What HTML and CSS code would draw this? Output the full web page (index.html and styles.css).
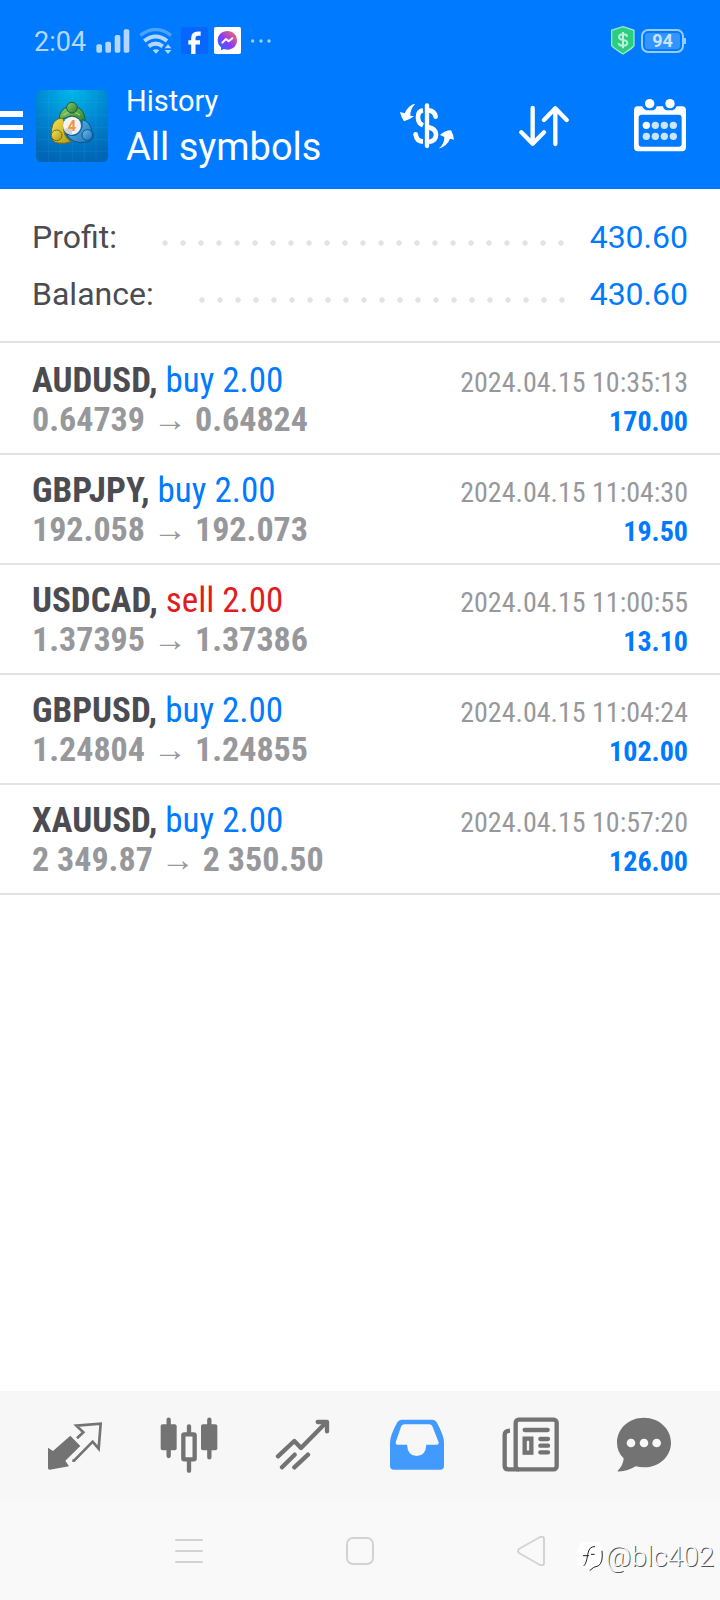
FILE: index.html
```html
<!DOCTYPE html>
<html lang="en">
<head>
<meta charset="utf-8">
<meta name="viewport" content="width=device-width, initial-scale=1">
<title>History</title>
<link rel="stylesheet" href="styles.css">
</head>
<body>
<div class="app">
  <div class="status">
    <span class="time">2:04</span>
    <svg class="signal" width="34" height="24" viewBox="288 84 102 72" fill="#b3d7ff"><rect x="289" y="130" width="17" height="25" rx="5"/><rect x="316" y="122" width="17" height="33" rx="5"/><rect x="344" y="102" width="17" height="53" rx="5"/><rect x="371" y="85" width="17" height="70" rx="5"/></svg>
    <svg class="wifi" width="33" height="26" viewBox="414 81 99 78" fill="none" stroke-width="10"><path d="M418 103Q464 68 510 103" stroke="#4ba3ff"/><path d="M430 120Q464 93 498 120M443 136Q464 120 485 136" stroke="#b3d7ff" stroke-width="12"/><path d="M455 148Q465 142 475 148L465 158ZM491 142L501 130 511 142ZM491 147H511L501 159Z" fill="#b3d7ff"/></svg>
    <svg class="fb" width="27" height="27" viewBox="0 0 81 81"><rect width="81" height="81" rx="5" fill="#0866ff"/><path d="M37 81V33Q37 20 51 20H59M22 46H57" fill="none" stroke="#fff" stroke-width="13"/></svg>
    <svg class="msgr" width="27" height="27" viewBox="0 0 81 81"><defs><linearGradient id="mg" x1="0" y1="1" x2="1" y2="0"><stop offset="0" stop-color="#087bff"/><stop offset=".45" stop-color="#8a39f7"/><stop offset="1" stop-color="#ff705b"/></linearGradient></defs><rect width="81" height="81" rx="5" fill="#fff"/><path d="M40 12C23 12 11 24 11 40Q11 53 21 61V70L30 66Q36 68 41 68C57 68 69 56 69 40S57 12 40 12Z" fill="url(#mg)"/><path d="M25 47L36 36 44 43 55 34" fill="none" stroke="#fff" stroke-width="6" stroke-linejoin="round" stroke-linecap="round"/></svg>
    <svg class="more" width="22" height="6" viewBox="0 0 66 18" fill="#a6d0ff"><circle cx="8" cy="9" r="5"/><circle cx="33" cy="9" r="5"/><circle cx="57" cy="9" r="5"/></svg>
    <svg class="shield" width="24" height="29" viewBox="753 77 72 87"><path d="M789 79L822 90V136Q818 143 789 161Q760 143 755 136V90Z" fill="#29cf7c" stroke="#9be5cd" stroke-width="4"/><path d="M801 109Q801 102 789 102Q777 102 777 110Q777 117 789 119Q802 121 802 128Q802 136 789 136Q776 136 776 128M789 95V144" fill="none" stroke="#bcf0dc" stroke-width="6"/></svg>
    <span class="battery">94</span>
  </div>

  <header class="header">
    <button class="icon-btn menu" aria-label="Menu"><svg width="23" height="34" viewBox="0 0 23 34" fill="#fff"><rect width="23" height="6"/><rect y="14" width="23" height="5"/><rect y="27" width="23" height="6"/></svg></button>
    <svg class="logo" width="72" height="72" viewBox="0 0 216 216">
      <defs>
        <radialGradient id="bg" cx=".5" cy="0" r="1"><stop offset="0" stop-color="#00b8e8"/><stop offset=".55" stop-color="#0083d0"/><stop offset="1" stop-color="#0065b4"/></radialGradient>
        <linearGradient id="gr" x1="0" y1="0" x2="1" y2="1"><stop offset="0" stop-color="#8fcf72"/><stop offset="1" stop-color="#267a2c"/></linearGradient>
        <linearGradient id="ye" x1="0" y1="0" x2="1" y2="1"><stop offset="0" stop-color="#f3e75c"/><stop offset="1" stop-color="#b19612"/></linearGradient>
        <linearGradient id="bl" x1="0" y1="0" x2="1" y2="1"><stop offset="0" stop-color="#67c0ee"/><stop offset="1" stop-color="#1870b4"/></linearGradient>
      </defs>
      <rect width="216" height="216" rx="16" fill="url(#bg)"/>
      <path d="M38 0V216M73 0V216M109 0V216M145 0V216M180 0V216M0 38H216M0 75H216M0 112H216M0 149H216M0 184H216" stroke="#5ecbf0" stroke-opacity=".16" stroke-width="2"/>
      <path d="M69 88Q71 57 97 50H121Q145 59 147 89L140 101Q119 66 89 84Z" fill="url(#gr)" stroke="#195f33" stroke-width="3"/>
      <path d="M80 84Q51 85 47 117L45 135Q48 158 66 159Q86 163 106 155Q76 138 85 96Z" fill="url(#ye)" stroke="#75670f" stroke-width="3"/>
      <path d="M138 89Q162 93 167 122L172 133Q171 155 151 156Q111 165 91 132Q126 148 138 111Z" fill="url(#bl)" stroke="#0d548c" stroke-width="3"/>
      <path d="M82 76Q108 55 132 76" fill="none" stroke="#b7e199" stroke-width="4" opacity=".6"/>
      <circle cx="108" cy="53" r="16" fill="url(#gr)" stroke="#195f33" stroke-width="3"/>
      <circle cx="62" cy="136" r="16" fill="url(#ye)" stroke="#75670f" stroke-width="3"/>
      <circle cx="154" cy="135" r="16" fill="url(#bl)" stroke="#0d548c" stroke-width="3"/>
      <circle cx="108" cy="107" r="27" fill="#f4f2f3"/><path d="M83 118A27 27 0 0 0 108 134V110Z" fill="#cfcfd6"/>
      <text class="logo-num" x="108" y="123" text-anchor="middle">4</text>
    </svg>
    <div class="titles"><h1>History</h1><p>All symbols</p></div>
    <div class="actions">
      <button class="icon-btn" aria-label="Currency"><svg width="54" height="46" viewBox="120 309 162 138">
        <g fill="none" stroke="#fff" stroke-width="14"><path d="M189 331Q174 333 174 351Q174 370 189 376M167 404Q170 424 189 425"/><path d="M206 331Q224 333 227 350" stroke-linecap="round"/><path d="M206 382Q228 386 228 404Q228 422 207 426"/></g>
        <path d="M201 316V438" stroke="#fff" stroke-width="13" stroke-linecap="round"/>
        <circle cx="167" cy="403" r="7" fill="#fff"/>
        <path d="M166 311Q145 315 134 340L120 336Q124 354 132 364Q148 360 162 349L151 347Q150 328 166 311ZM236 446Q254 432 253 411L240 405Q254 391 273 391Q280 403 282 419L270 416Q262 438 236 446Z" fill="#fff"/>
      </svg></button>
      <button class="icon-btn" aria-label="Sort"><svg width="50" height="42" viewBox="477 315 150 126" fill="none" stroke="#fff" stroke-width="13" stroke-linecap="round" stroke-linejoin="round"><path d="M518 324V431M484 397L518 431 552 397M586 432V325M552 360L586 325 620 360"/></svg></button>
      <button class="icon-btn" aria-label="Calendar"><svg width="52" height="54" viewBox="822 296 156 162">
        <path d="M833 318H846Q852 328 858 330H880Q888 328 890 318H909Q911 328 920 330H938Q946 328 950 318H966Q978 318 978 330V441Q978 453 966 453H834Q822 453 822 441V330Q822 318 833 318ZM845 343Q836 343 836 352V430Q836 439 845 439H956Q965 439 965 430V352Q965 343 956 343Z" fill="#fff" fill-rule="evenodd"/>
        <circle cx="869" cy="310" r="14" fill="#fff"/><circle cx="930" cy="310" r="14" fill="#fff"/><circle cx="859" cy="375" r="11" fill="#fff"/>
        <g fill="#cce5ff"><circle cx="886" cy="375" r="11"/><circle cx="913" cy="375" r="11"/><circle cx="940" cy="375" r="11"/><circle cx="859" cy="408" r="11"/><circle cx="886" cy="408" r="11"/><circle cx="913" cy="408" r="11"/><circle cx="940" cy="408" r="11"/></g>
      </svg></button>
    </div>
  </header>

  <main class="content">
    <dl class="summary">
      <div class="sum-row"><dt>Profit:</dt><dd class="dots"></dd><dd class="sum-value">430.60</dd></div>
      <div class="sum-row"><dt>Balance:</dt><dd class="dots"></dd><dd class="sum-value">430.60</dd></div>
    </dl>
    <ul class="deals">
      <li class="deal"><div class="line"><span><b class="symbol">AUDUSD,</b> <span class="buy">buy 2.00</span></span><time>2024.04.15 10:35:13</time></div><div class="line"><b class="prices"><span>0.64739</span><span class="arrow">→</span><span>0.64824</span></b><b class="result">170.00</b></div></li>
      <li class="deal"><div class="line"><span><b class="symbol">GBPJPY,</b> <span class="buy">buy 2.00</span></span><time>2024.04.15 11:04:30</time></div><div class="line"><b class="prices"><span>192.058</span><span class="arrow">→</span><span>192.073</span></b><b class="result">19.50</b></div></li>
      <li class="deal"><div class="line"><span><b class="symbol">USDCAD,</b> <span class="sell">sell 2.00</span></span><time>2024.04.15 11:00:55</time></div><div class="line"><b class="prices"><span>1.37395</span><span class="arrow">→</span><span>1.37386</span></b><b class="result">13.10</b></div></li>
      <li class="deal"><div class="line"><span><b class="symbol">GBPUSD,</b> <span class="buy">buy 2.00</span></span><time>2024.04.15 11:04:24</time></div><div class="line"><b class="prices"><span>1.24804</span><span class="arrow">→</span><span>1.24855</span></b><b class="result">102.00</b></div></li>
      <li class="deal"><div class="line"><span><b class="symbol">XAUUSD,</b> <span class="buy">buy 2.00</span></span><time>2024.04.15 10:57:20</time></div><div class="line"><b class="prices"><span>2 349.87</span><span class="arrow">→</span><span>2 350.50</span></b><b class="result">126.00</b></div></li>
    </ul>
  </main>

  <nav class="tabs">
    <button class="icon-btn" aria-label="Quotes"><svg width="56" height="56" viewBox="141 82 168 168"><path d="M211 138L241 169 196 213 207 230 149 240Q144 240 144 235V174L159 184Z" fill="#737373"/><path d="M217 213H222L278 156 296 177 302 102 229 108 250 128 231 146" fill="none" stroke="#737373" stroke-width="8"/></svg></button>
    <button class="icon-btn" aria-label="Charts"><svg width="58" height="56" viewBox="480 82 174 168"><g fill="none" stroke="#737373" stroke-width="13" stroke-linecap="round"><path d="M506 90V199M628 90V203M567 110V130M567 212V243"/></g><rect x="482" y="104" width="48" height="78" rx="6" fill="#737373"/><rect x="603" y="104" width="49" height="78" rx="6" fill="#737373"/><rect x="550" y="134" width="34" height="75" rx="3" fill="#f7f7f7" stroke="#737373" stroke-width="13"/></svg></button>
    <button class="icon-btn" aria-label="Trade"><svg width="56" height="56" viewBox="825 82 168 168" fill="none" stroke="#737373" stroke-width="13" stroke-linecap="round" stroke-linejoin="round"><path d="M834 200L883 154 903 175 979 98M953 97H981V125M846 233L884 195M883 233L924 195"/></svg></button>
    <button class="icon-btn" aria-label="History" aria-current="page"><svg width="56" height="56" viewBox="87 82 168 168"><path d="M124 90H218Q226 90 230 98Q252 137 252 160V228Q252 240 240 240H102Q90 240 90 228V160Q90 137 112 98Q117 90 124 90ZM133 104Q127 104 124 109L107 158Q106 165 112 165H141Q143 199 170 199T199 165H230Q237 165 236 158L217 110Q214 104 208 104Z" fill="#429aff" fill-rule="evenodd"/></svg></button>
    <button class="icon-btn" aria-label="News"><svg width="58" height="56" viewBox="429 82 174 168" fill="none" stroke="#737373" stroke-width="13"><rect x="470" y="90" width="123" height="149" rx="9"/><path d="M453 123Q437 124 437 136V229Q437 239 448 239H480"/><path d="M497 121H566M544 148H567M544 168H567M544 188H567" stroke-linecap="round"/><rect x="497" y="147" width="20" height="42"/></svg></button>
    <button class="icon-btn" aria-label="Messages"><svg width="56" height="56" viewBox="768 82 168 168"><path d="M849 84C803 84 768 117 768 159Q768 187 788 206Q788 225 769 245Q797 247 824 230Q836 233 849 233C895 233 930 200 930 159S895 84 849 84Z" fill="#737373"/><g fill="#f7f7f7"><circle cx="810" cy="160" r="13"/><circle cx="849" cy="160" r="13"/><circle cx="887" cy="160" r="13"/></g></svg></button>
  </nav>

  <div class="system">
    <button class="icon-btn" aria-label="Recent apps"><svg width="28" height="30" viewBox="0 0 28 30" stroke="#d3d3d3" stroke-width="2" stroke-linecap="round"><path d="M1 4H27M1 15H27M1 26H27"/></svg></button>
    <button class="icon-btn" aria-label="Home"><svg width="28" height="30" viewBox="0 0 28 30" fill="none" stroke="#d3d3d3" stroke-width="2"><rect x="1" y="2" width="26" height="26" rx="6"/></svg></button>
    <button class="icon-btn" aria-label="Back"><svg width="28" height="30" viewBox="0 0 28 30" fill="none" stroke="#d3d3d3" stroke-width="2" stroke-linejoin="round"><path d="M2 13L23 1Q27 0 27 3V27Q27 30 23 29L2 17Q0 15 2 13Z"/></svg></button>
    <div class="watermark"><svg width="27" height="30" viewBox="0 0 81 90"><path d="M12 0Q40 -6 68 3Q78 12 75 42Q77 66 58 74L38 84L34 78Q5 76 2 68Q-3 20 12 0Z" fill="#fff"/><path d="M75 26Q79 60 65 71Q48 74 38 86M18 41H36M20 72Q28 66 32 38Q36 12 54 14M42 37H53" fill="none" stroke="#222" stroke-width="3"/></svg><span>@blc402</span></div>
  </div>
</div>
</body>
</html>
```
FILE: styles.css
```css
* { box-sizing: border-box; }
body, h1, p, dl, dd, ul { margin: 0; padding: 0; }
body { font-family: Roboto, "Liberation Sans", sans-serif; background: #fff; }
svg { display: block; flex: none; }
.app { display: flex; flex-direction: column; min-height: 100vh; }
.icon-btn { display: flex; align-items: center; justify-content: center; padding: 0; border: 0; background: none; }

.status { display: flex; align-items: center; height: 64px; padding: 17px 34px 0 34px; background: #007aff; }
.time { font-size: 27px; color: #b3d7ff; width: 62px; padding-top: 2px; }
.wifi { margin-left: 9px; }
.fb { margin-left: 9px; }
.msgr { margin-left: 6px; }
.more { margin-left: 9px; }
.shield { margin-left: auto; }
.battery { position: relative; width: 43px; height: 24px; margin: 0 2px 0 6px; border: 2px solid #99caff; border-radius: 7px; background: #3395ff; box-shadow: inset 0 0 0 2px #007aff; color: #cce4ff; font-size: 18px; font-weight: 700; line-height: 20px; text-align: center; }
.battery::after { content: ""; position: absolute; right: -4px; top: 7px; width: 2px; height: 6px; background: #99caff; }

.header { display: flex; align-items: center; height: 125px; padding-right: 34px; background: #007aff; border-bottom: 1px solid #0874e8; }
.menu { padding-top: 3px; }
.logo { margin: 0 18px 0 13px; }
.logo-num { font: 700 44px Roboto, sans-serif; fill: #f3953c; }
.titles { flex: 1; color: #fff; }
.titles h1 { font-size: 29px; font-weight: 400; line-height: 42px; }
.titles p { font-size: 38px; line-height: 50px; }
.actions { display: flex; align-items: center; gap: 65px; }

.content { flex: 1; }
.summary { padding: 20px 32px 18px; border-bottom: 2px solid #e3e3e4; font-size: 32px; line-height: 57px; color: #4b4b52; }
.sum-row { display: flex; align-items: center; }
.dots { flex: 1; height: 6px; margin: 10px 17px 0 39px; background: radial-gradient(circle closest-side, #e3e3e4 80%, transparent) 0 0 / 18px 6px; }
.sum-value { color: #007aff; }

.deals { list-style: none; padding-top: 2px; }
.deal { padding: 16px 32px 14px; border-bottom: 2px solid #e3e3e4; font-family: "Roboto Condensed", Roboto, sans-serif; font-size: 35px; line-height: 39px; }
.line { display: flex; justify-content: space-between; align-items: baseline; height: 39px; white-space: nowrap; }
.symbol { color: #4b4b52; }
.buy { color: #007aff; }
.sell { color: #e31b1f; }
.deal time { font-size: 28px; color: #97989b; }
.prices { display: flex; align-items: baseline; gap: 8px; font-size: 34px; color: #97989b; }
.arrow { font-family: "Liberation Sans", sans-serif; font-weight: 400; }
.result { font-size: 28px; color: #007aff; }

.tabs { display: grid; grid-template-columns: repeat(6, 1fr); height: 110px; padding: 0 18px 3px; background: #f7f7f7; }
.system { position: relative; display: grid; grid-template-columns: repeat(3, 1fr); height: 99px; padding: 0 103px; background: #f9f9f9; }
.watermark { position: absolute; right: 6px; bottom: 26px; display: flex; align-items: center; gap: 2px; font-size: 28px; font-weight: 300; line-height: 34px; color: #f9f9f9; text-shadow: 1px 1px 0 #555; }
```
